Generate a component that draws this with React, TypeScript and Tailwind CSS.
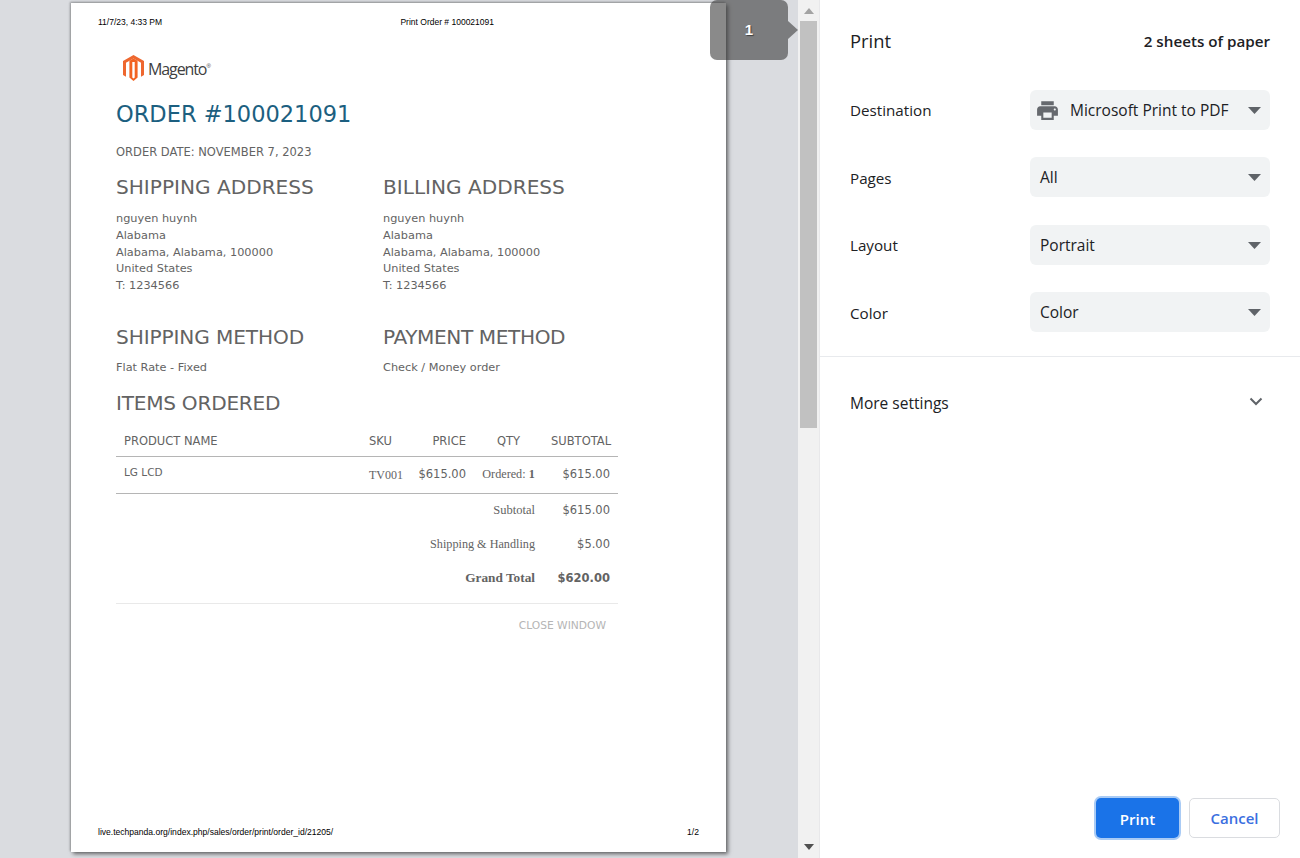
const dv = "font-['DejaVu_Sans',sans-serif]";

function Logo() {
  return (
    <div className="flex items-center ml-[7px] h-[26px]">
      <svg width="21" height="26" viewBox="0 0 21 26">
        <path fill="#ee672f" d="M10.5 0 L21 6 V20 L18 21.7 V7.7 L10.5 3.4 L3 7.7 V21.7 L0 20 V6 Z" />
        <path fill="#f26322" d="M10.5 3.4 L14.6 5.8 V22.5 L10.5 26 L6.4 22.5 V5.8 Z" />
        <path fill="#fff" d="M9.3 7 H11.7 V22.6 L10.5 23.4 L9.3 22.6 Z" />
        <path fill="#fff" d="M3.4 8 L5.2 7 V22.2 L3.4 21.2 Z M15.8 7 L17.6 8 V21.2 L15.8 22.2 Z" />
      </svg>
      <span className="ml-[4px] pt-[2px] font-['Open_Sans',sans-serif] text-[16px] leading-none tracking-[-1.1px] text-[#404040]">Magento</span>
      <span className="self-start mt-[8px] text-[6px] leading-none text-[#404040] font-['Liberation_Sans',sans-serif]">®</span>
    </div>
  );
}

function Block({ title, lines, className, gap, titleClass }: { title: string; lines: string[]; className?: string; gap: string; titleClass?: string }) {
  return (
    <div className={className}>
      <div className={`text-[20.1px] leading-[24px] text-[#636363] ${titleClass ?? ""}`}>{title}</div>
      <div className={`${gap} text-[11.3px] leading-[16.75px] text-[#636363]`}>
        {lines.map((l) => (
          <div key={l}>{l}</div>
        ))}
      </div>
    </div>
  );
}

const serif = "font-['Liberation_Serif',serif]";
const cols = "grid-cols-[245px_50px_55px_85px_67px]";

function Sum({ label, value, bold, h, size }: { label: string; value: string; bold?: boolean; h: string; size: string }) {
  return (
    <div className={`flex items-center justify-end ${h}`}>
      <span className={`${serif} text-[#636363] ${size} ${bold ? "font-bold" : ""}`}>{label}</span>
      <span className={`w-[75px] pt-[1px] text-right text-[11.5px] text-[#636363] ${bold ? "font-bold" : ""}`}>{value}</span>
    </div>
  );
}

function Paper() {
  const address = ["nguyen huynh", "Alabama", "Alabama, Alabama, 100000", "United States", "T: 1234566"];
  return (
    <div className={`flex h-[849px] w-[655px] flex-col bg-white shadow-[2px_2px_4px_rgba(0,0,0,0.55),-1px_-1px_2px_rgba(0,0,0,0.3)] ${dv}`}>
      <div className="flex h-[38px] items-center justify-between pl-[27px] pr-[232px] pt-[1px] font-['Liberation_Sans',sans-serif] text-[8.5px] text-black">
        <span>11/7/23, 4:33 PM</span>
        <span>Print Order # 100021091</span>
      </div>
      <div className="flex flex-1 flex-col pl-[45px] pr-[108px]">
        <div className="mt-[14px]"><Logo /></div>
        <div className="mt-[18px] text-[22.5px] leading-[30px] text-[#1c5f80]">ORDER #100021091</div>
        <div className="mt-[15px] text-[11.5px] leading-[16px] text-[#636363]">ORDER DATE: NOVEMBER 7, 2023</div>
        <div className="mt-[15px] flex">
          <Block className="w-[267px]" title="SHIPPING ADDRESS" lines={address} gap="mt-[12px]" />
          <Block title="BILLING ADDRESS" lines={address} gap="mt-[12px]" />
        </div>
        <div className="mt-[30px] flex">
          <Block className="w-[267px]" titleClass="tracking-[-0.1px]" title="SHIPPING METHOD" lines={["Flat Rate - Fixed"]} gap="mt-[11px]" />
          <Block titleClass="tracking-[-0.4px]" title="PAYMENT METHOD" lines={["Check / Money order"]} gap="mt-[11px]" />
        </div>
        <div className="mt-[14px] text-[20.1px] leading-[24px] tracking-[-0.25px] text-[#636363]">ITEMS ORDERED</div>
        <div className={`mt-[14px] grid h-[28px] ${cols} items-center border-b border-[#b5b5b5] text-[11.5px] text-[#636363]`}>
          <span className="pl-[8px]">PRODUCT NAME</span>
          <span className="pl-[8px]">SKU</span>
          <span className="text-right">PRICE</span>
          <span className="text-center">QTY</span>
          <span className="pr-[8px] text-right">SUBTOTAL</span>
        </div>
        <div className={`grid h-[37px] ${cols} items-center border-b border-[#b5b5b5] text-[#636363]`}>
          <span className="mb-[4px] pl-[8px] text-[10.5px]">LG LCD</span>
          <span className={`pl-[8px] text-[12px] ${serif}`}>TV001</span>
          <span className="text-right text-[11.5px]">$615.00</span>
          <span className={`text-center text-[12.2px] ${serif}`}>Ordered: <b>1</b></span>
          <span className="pr-[8px] text-right text-[11.5px]">$615.00</span>
        </div>
        <div className="pr-[8px]">
          <Sum label="Subtotal" value="$615.00" h="h-[34px]" size="text-[12.5px]" />
          <Sum label="Shipping &amp; Handling" value="$5.00" h="h-[34px]" size="text-[12.2px]" />
          <Sum label="Grand Total" value="$620.00" bold h="h-[33px]" size="text-[13.3px]" />
        </div>
        <div className="mt-[8px] border-t border-[#e9e9e9] pr-[12px] pt-[15px] text-right text-[10.7px] leading-[13px] text-[#b5b5b5]">
          CLOSE WINDOW
        </div>
      </div>
      <div className="flex h-[29px] items-start justify-between pl-[27px] pr-[27px] pt-[3px] font-['Liberation_Sans',sans-serif] text-[8.55px] text-black">
        <span>live.techpanda.org/index.php/sales/order/print/order_id/21205/</span>
        <span>1/2</span>
      </div>
    </div>
  );
}

function Arrow() {
  return (
    <svg width="13" height="7" viewBox="0 0 13 7">
      <path d="M0 0 H13 L6.5 7 Z" fill="#5f6368" />
    </svg>
  );
}

function Row({ label, children, top, value, labelPad }: { label: string; top: string; value: string; labelPad: string; children?: React.ReactNode }) {
  return (
    <div className={`flex items-center ${top}`}>
      <span className={`w-[180px] ${labelPad} text-[15.2px] text-[#202124]`}>{label}</span>
      <div className="flex h-[40px] w-[240px] items-center justify-between rounded-[6px] bg-[#f1f3f4] pl-[10px] pr-[9px] text-[15.5px] text-[#202124]">
        <span className="flex items-center">
          {children}
          <span className="pt-[2px]">{value}</span>
        </span>
        <Arrow />
      </div>
    </div>
  );
}

function Panel() {
  return (
    <div className="flex h-full w-[481px] flex-col border-l border-[#e8e8ea] bg-white font-['Open_Sans',sans-serif]">
      <div className="flex h-[82px] items-center justify-between pl-[30px] pr-[30px]">
        <span className="text-[18.4px] text-[#202124]">Print</span>
        <span className="pt-[1px] text-[15.2px] font-semibold text-[#202124]">2 sheets of paper</span>
      </div>
      <div className="border-b border-[#e8eaed] pb-[24px] pl-[30px] pr-[30px]">
        <Row label="Destination" value="Microsoft Print to PDF" top="mt-[8px]" labelPad="pt-[1px]">
          <svg width="25" height="25" viewBox="0 0 24 24" className="mr-[10px] -ml-[5px]" fill="#66696e">
            <path d="M19 8H5c-1.66 0-3 1.34-3 3v6h4v4h12v-4h4v-6c0-1.66-1.34-3-3-3zm-3 11H8v-5h8v5zm3-7c-.55 0-1-.45-1-1s.45-1 1-1 1 .45 1 1-.45 1-1 1zm-1-9H6v4h12V3z" />
          </svg>
        </Row>
        <Row label="Pages" value="All" top="mt-[27px]" labelPad="pt-[3px]" />
        <Row label="Layout" value="Portrait" top="mt-[28px]" labelPad="pt-[1px]" />
        <Row label="Color" value="Color" top="mt-[27px]" labelPad="pt-[3px]" />
      </div>
      <div className="flex h-[93px] items-center justify-between pl-[30px] pr-[37px]">
        <span className="text-[15.5px] text-[#202124]">More settings</span>
        <svg width="14" height="9" viewBox="0 0 14 9" fill="none" stroke="#5f6368" strokeWidth="2" className="mb-[4px]">
          <path d="M1.5 1.5 L7 7 L12.5 1.5" />
        </svg>
      </div>
      <div className="mt-auto flex items-center justify-end gap-[10px] pb-[20px] pr-[20px]">
        <button className="h-[40px] w-[83px] rounded-[5px] bg-[#1a73e8] pt-[2px] text-[15px] font-semibold text-white ring-2 ring-[#a9cbf5]">Print</button>
        <button className="h-[40px] w-[91px] rounded-[5px] border border-[#dadce0] bg-white pt-[1px] text-[15px] font-semibold text-[#3b6fe0]">Cancel</button>
      </div>
    </div>
  );
}

export default function App() {
  return (
    <div className="flex h-[858px] w-[1300px] overflow-hidden bg-white">
      <div className="relative h-full w-[798px] bg-[#dadce0] pl-[71px] pt-[3px]">
        <Paper />
        <div className="absolute left-[710px] top-0 flex h-[60px] w-[78px] items-center justify-center rounded-[7px] bg-[rgba(60,60,60,0.6)] font-['Liberation_Sans',sans-serif] text-[15px] font-bold text-white [text-shadow:1px_1px_1px_rgba(0,0,0,0.5)]">
          1
          <div className="absolute left-[78px] top-[21px] h-0 w-0 border-y-[9px] border-l-[10px] border-y-transparent border-l-[rgba(60,60,60,0.6)]" />
        </div>
      </div>
      <div className="flex h-full w-[21px] flex-col items-center bg-[#f1f1f1]">
        <svg width="10" height="6" viewBox="0 0 10 6" className="mt-[8px]"><path d="M5 0 L10 6 H0 Z" fill="#a3a3a3" /></svg>
        <div className="mt-[7px] h-[407px] w-[17px] bg-[#c1c1c1]" />
        <svg width="10" height="6" viewBox="0 0 10 6" className="mt-auto mb-[8px]"><path d="M0 0 H10 L5 6 Z" fill="#505050" /></svg>
      </div>
      <Panel />
    </div>
  );
}
